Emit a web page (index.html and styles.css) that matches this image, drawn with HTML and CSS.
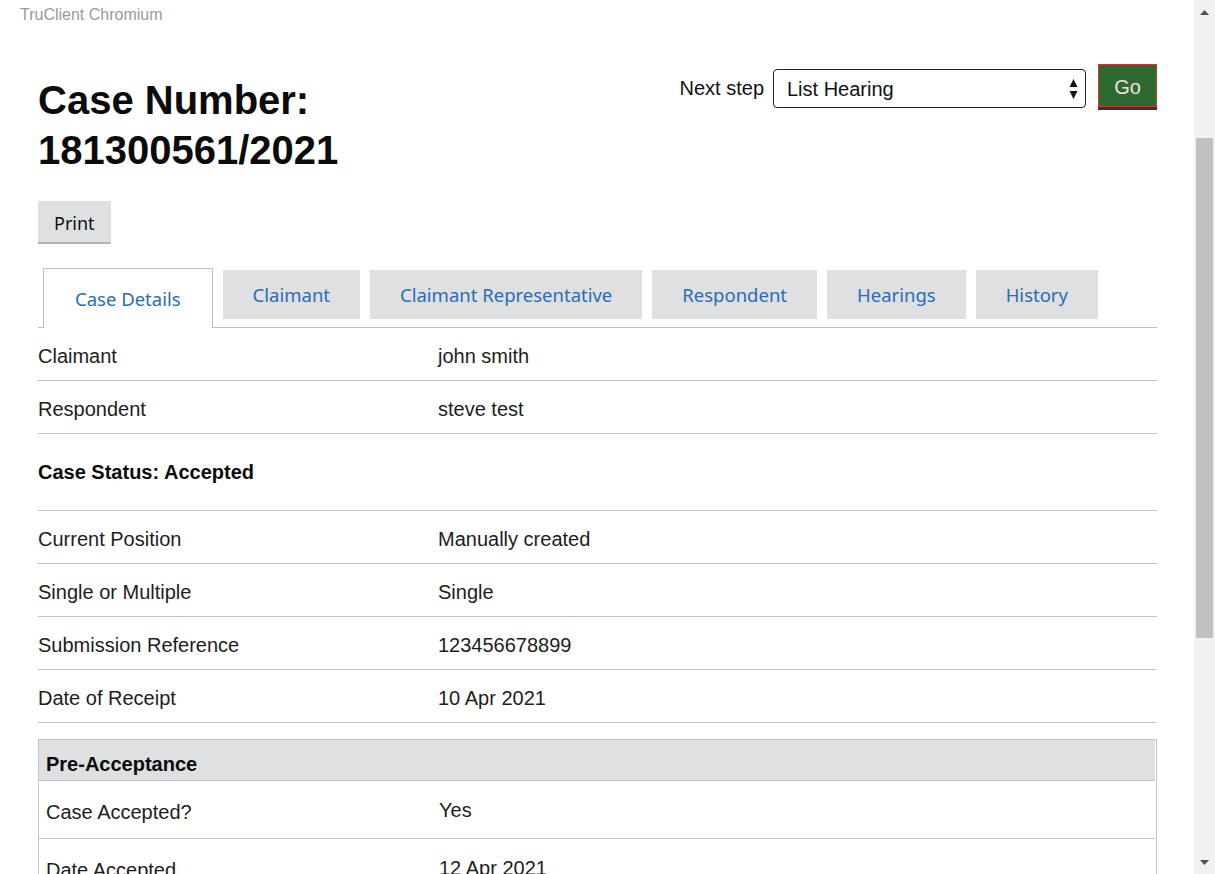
FILE: index.html
```html
<!DOCTYPE html>
<html lang="en">
<head>
<meta charset="utf-8">
<title>Case Details</title>
<link rel="stylesheet" href="styles.css">
</head>
<body>
<div class="window">
  <div class="page">
    <div class="app-title">TruClient Chromium</div>
    <main class="content">
      <header class="case-header">
        <h1 class="case-title">Case Number:<br>181300561/2021</h1>
        <form class="next-step">
          <label class="next-step-label">Next step</label>
          <div class="select">
            <span class="select-text">List Hearing</span>
            <svg class="select-arrows" width="9" height="22" viewBox="0 0 9 22">
              <path d="M4.5 1 L8.5 9 L0.5 9 Z" fill="#111"/>
              <path d="M0.5 13 L8.5 13 L4.5 21 Z" fill="#111"/>
            </svg>
          </div>
          <button class="go-btn" type="button">Go</button>
        </form>
      </header>

      <button class="print-btn" type="button">Print</button>

      <nav class="tabs">
        <a class="tab tab-active">Case Details</a>
        <a class="tab">Claimant</a>
        <a class="tab">Claimant Representative</a>
        <a class="tab">Respondent</a>
        <a class="tab">Hearings</a>
        <a class="tab">History</a>
      </nav>

      <div class="summary">
        <div class="row"><div class="key">Claimant</div><div class="value">john smith</div></div>
        <div class="row"><div class="key">Respondent</div><div class="value">steve test</div></div>
        <h2 class="status">Case Status: Accepted</h2>
        <div class="row"><div class="key">Current Position</div><div class="value">Manually created</div></div>
        <div class="row"><div class="key">Single or Multiple</div><div class="value">Single</div></div>
        <div class="row"><div class="key">Submission Reference</div><div class="value">123456678899</div></div>
        <div class="row"><div class="key">Date of Receipt</div><div class="value">10 Apr 2021</div></div>
      </div>

      <section class="panel">
        <h3 class="panel-head">Pre-Acceptance</h3>
        <div class="panel-row"><div class="panel-key">Case Accepted?</div><div class="panel-value">Yes</div></div>
        <div class="panel-row"><div class="panel-key">Date Accepted</div><div class="panel-value">12 Apr 2021</div></div>
      </section>
    </main>
  </div>
  <div class="scrollbar">
    <div class="sb-btn">
      <svg width="9" height="5" viewBox="0 0 9 5"><path d="M0 5 L4.5 0 L9 5 Z" fill="#505050"/></svg>
    </div>
    <div class="sb-thumb"></div>
    <div class="sb-space"></div>
    <div class="sb-btn">
      <svg width="9" height="5" viewBox="0 0 9 5"><path d="M0 0 L9 0 L4.5 5 Z" fill="#505050"/></svg>
    </div>
  </div>
</div>
</body>
</html>
```

FILE: styles.css
```css
html, body {
  margin: 0;
  padding: 0;
  background: #fff;
}

body {
  font-family: "Liberation Sans", Arial, sans-serif;
  color: #1d1d1d;
}

.window {
  display: flex;
  width: 1215px;
  height: 874px;
  overflow: hidden;
}

.page {
  flex: 1;
  min-width: 0;
  overflow: hidden;
}

.app-title {
  padding: 6px 20px 0;
  font-size: 16px;
  line-height: 18px;
  color: #9a9a9a;
}

.content {
  padding: 0 37px 0 38px;
}

/* Header */
.case-header {
  display: flex;
  justify-content: space-between;
  align-items: flex-start;
  margin-top: 40px;
}

.case-title {
  margin: 11px 0 0;
  font-size: 40px;
  line-height: 50px;
  font-weight: bold;
  color: #0b0b0b;
}

.next-step {
  display: flex;
  align-items: flex-start;
  margin: 0;
}

.next-step-label {
  margin-top: 5px;
  font-size: 20px;
  line-height: 39px;
  color: #111;
}

.select {
  display: flex;
  align-items: center;
  justify-content: space-between;
  box-sizing: border-box;
  width: 313px;
  height: 39px;
  margin: 5px 0 0 9px;
  padding: 0 7px 0 13px;
  border: 1px solid #222;
  border-radius: 4px;
  background: #fff;
}

.select-text {
  font-size: 20px;
  line-height: 24px;
  color: #111;
}

.go-btn {
  box-sizing: border-box;
  width: 59px;
  height: 43px;
  margin-left: 12px;
  padding: 4px 0 0;
  border: 1px solid #d6342a;
  background: #2c6a31;
  box-shadow: 0 3px 0 #23402a;
  font-family: "Liberation Sans", Arial, sans-serif;
  font-size: 20px;
  color: #f0e2dc;
}

/* Print */
.print-btn {
  display: block;
  box-sizing: border-box;
  height: 43px;
  margin-top: 26px;
  padding: 2px 16px 0;
  border: none;
  border-bottom: 2px solid #b1b4b6;
  background: #dee0e2;
  font-family: "Noto Sans", "Open Sans", sans-serif;
  font-size: 18px;
  color: #111;
}

/* Tabs */
.tabs {
  display: flex;
  align-items: flex-start;
  gap: 10px;
  height: 59px;
  margin-top: 24px;
  padding-left: 5px;
  border-bottom: 1px solid #c0c0c0;
}

.tab {
  display: flex;
  align-items: center;
  box-sizing: border-box;
  height: 49px;
  margin-top: 2px;
  padding: 0 30px;
  background: #dee0e2;
  font-family: "Noto Sans", "Open Sans", sans-serif;
  font-size: 18.5px;
  color: #2b6cb5;
  white-space: nowrap;
}

.tab-active {
  height: 60px;
  margin-top: 0;
  padding: 0 31px;
  background: #fff;
  border: 1px solid #c0c0c0;
  border-bottom: none;
}

/* Summary rows */
.row {
  display: grid;
  grid-template-columns: 400px 1fr;
  padding: 16px 0 11px;
  border-bottom: 1px solid #c4c4c4;
  font-size: 20px;
  line-height: 25px;
}

.status {
  margin: 0;
  padding: 26px 0 25px;
  border-bottom: 1px solid #c4c4c4;
  font-size: 20px;
  line-height: 25px;
  font-weight: bold;
  color: #0b0b0b;
}

/* Pre-acceptance panel */
.panel {
  margin-top: 16px;
  border: 1px solid #c4c4c4;
  border-bottom: none;
}

.panel-head {
  margin: 0 1px 0 0;
  padding: 12px 7px 3px;
  background: #dee0e2;
  border-bottom: 1px solid #c4c4c4;
  font-size: 20px;
  line-height: 25px;
  font-weight: bold;
  color: #0b0b0b;
}

.panel-row {
  display: grid;
  grid-template-columns: 400px 1fr;
  margin-right: 1px;
  border-bottom: 1px solid #c4c4c4;
  font-size: 20px;
  line-height: 25px;
}

.panel-key {
  padding: 19px 0 13px 7px;
}

.panel-value {
  padding: 17px 0 13px;
}

/* Scrollbar */
.scrollbar {
  display: flex;
  flex-direction: column;
  align-items: center;
  width: 21px;
  height: 874px;
  background: #f1f1f1;
}

.sb-btn {
  display: flex;
  align-items: center;
  justify-content: center;
  width: 21px;
  height: 24px;
}

.sb-thumb {
  width: 17px;
  height: 500px;
  margin-top: 114px;
  background: #c1c1c1;
}

.sb-space {
  flex: 1;
}
```
